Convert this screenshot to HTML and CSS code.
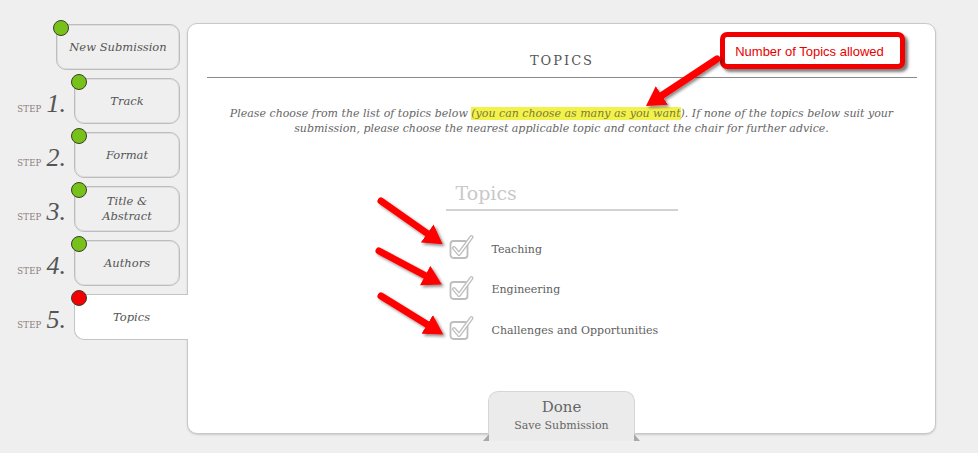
FILE: index.html
```html
<!DOCTYPE html>
<html>
<head>
<meta charset="utf-8">
<link rel="stylesheet" href="styles.css">
</head>
<body>
<div class="page">
  <nav class="steps">
    <div class="step-row">
      <div class="tab tab-wide"><span class="dot"></span>New Submission</div>
    </div>
    <div class="step-row">
      <div class="step-label"><span class="step-word">STEP</span><span class="step-num">1.</span></div>
      <div class="tab"><span class="dot"></span>Track</div>
    </div>
    <div class="step-row">
      <div class="step-label"><span class="step-word">STEP</span><span class="step-num">2.</span></div>
      <div class="tab"><span class="dot"></span>Format</div>
    </div>
    <div class="step-row">
      <div class="step-label"><span class="step-word">STEP</span><span class="step-num">3.</span></div>
      <div class="tab"><span class="dot"></span>Title &amp;<br>Abstract</div>
    </div>
    <div class="step-row">
      <div class="step-label"><span class="step-word">STEP</span><span class="step-num">4.</span></div>
      <div class="tab"><span class="dot"></span>Authors</div>
    </div>
    <div class="step-row">
      <div class="step-label"><span class="step-word">STEP</span><span class="step-num">5.</span></div>
      <div class="tab tab-active"><span class="dot dot-red"></span>Topics</div>
    </div>
  </nav>
  <main class="panel">
    <h1 class="panel-title">TOPICS</h1>
    <p class="intro">Please choose from the list of topics below <mark class="hl">(you can choose as many as you want</mark>). If none of the topics below suit your<br>submission, please choose the nearest applicable topic and contact the chair for further advice.</p>
    <section class="topics">
      <h2 class="topics-title">Topics</h2>
      <ul class="topic-list">
        <li class="topic"><svg class="check" width="26" height="26" viewBox="0 0 26 26"><rect x="1.5" y="7" width="17" height="17" rx="3" fill="none" stroke="#bdbdbd" stroke-width="1.8"/><path d="M5 14 L10 20 L22.5 3" fill="none" stroke="#bdbdbd" stroke-width="4" stroke-linejoin="round" stroke-linecap="round"/><path d="M5 14 L10 20 L22.5 3" fill="none" stroke="#fff" stroke-width="1.4" stroke-linejoin="round" stroke-linecap="round"/></svg><span>Teaching</span></li>
        <li class="topic"><svg class="check" width="26" height="26" viewBox="0 0 26 26"><rect x="1.5" y="7" width="17" height="17" rx="3" fill="none" stroke="#bdbdbd" stroke-width="1.8"/><path d="M5 14 L10 20 L22.5 3" fill="none" stroke="#bdbdbd" stroke-width="4" stroke-linejoin="round" stroke-linecap="round"/><path d="M5 14 L10 20 L22.5 3" fill="none" stroke="#fff" stroke-width="1.4" stroke-linejoin="round" stroke-linecap="round"/></svg><span>Engineering</span></li>
        <li class="topic"><svg class="check" width="26" height="26" viewBox="0 0 26 26"><rect x="1.5" y="7" width="17" height="17" rx="3" fill="none" stroke="#bdbdbd" stroke-width="1.8"/><path d="M5 14 L10 20 L22.5 3" fill="none" stroke="#bdbdbd" stroke-width="4" stroke-linejoin="round" stroke-linecap="round"/><path d="M5 14 L10 20 L22.5 3" fill="none" stroke="#fff" stroke-width="1.4" stroke-linejoin="round" stroke-linecap="round"/></svg><span>Challenges and Opportunities</span></li>
      </ul>
    </section>
    <div class="done">
      <span class="done-main">Done</span>
      <span class="done-sub">Save Submission</span>
    </div>
  </main>
</div>
<div class="callout">Number of Topics allowed</div>
<svg class="annotations" width="978" height="453" viewBox="0 0 978 453">
  <defs>
    <filter id="sh" x="-20%" y="-20%" width="140%" height="140%">
      <feDropShadow dx="2" dy="2" stdDeviation="1.5" flood-color="#000" flood-opacity="0.45"/>
    </filter>
    <marker id="head" markerUnits="userSpaceOnUse" markerWidth="20" markerHeight="22" refX="1" refY="11" orient="auto">
      <path d="M0,0 L19,11 L0,22 z" fill="#f00"/>
    </marker>
  </defs>
  <g filter="url(#sh)" stroke="#f00" stroke-width="7" stroke-linecap="round" fill="none">
    <line x1="717" y1="59" x2="661" y2="96" marker-end="url(#head)"/>
    <line x1="381" y1="201" x2="428" y2="234" marker-end="url(#head)"/>
    <line x1="379" y1="251" x2="426" y2="276" marker-end="url(#head)"/>
    <line x1="381" y1="296" x2="428" y2="325" marker-end="url(#head)"/>
  </g>
</svg>
</body>
</html>
```

FILE: styles.css
```css
html, body {
  margin: 0;
  padding: 0;
}
body {
  background: #efefef;
  font-family: "DejaVu Serif", "Liberation Serif", serif;
  color: #555;
  width: 978px;
  height: 453px;
  overflow: hidden;
  position: relative;
}
.page {
  display: flex;
  padding-top: 23px;
}
.steps {
  width: 187px;
  display: flex;
  flex-direction: column;
  gap: 8px;
  padding-top: 1px;
}
.step-row {
  display: flex;
  align-items: center;
  justify-content: flex-end;
  height: 46px;
}
.step-label {
  flex: 1;
  display: flex;
  align-items: baseline;
  justify-content: flex-end;
  gap: 5px;
  padding-right: 8px;
  padding-top: 6px;
}
.step-word {
  font-size: 8.5px;
  color: #8a7c7c;
  letter-spacing: 0.2px;
}
.step-num {
  font-family: "Liberation Serif", serif;
  font-style: italic;
  font-size: 26px;
  line-height: 26px;
  color: #555;
}
.tab {
  position: relative;
  box-sizing: border-box;
  width: 106px;
  height: 46px;
  margin-right: 7px;
  border: 1px solid #bdbdbd;
  box-shadow: inset 0 0 0 1px #dedede;
  border-radius: 10px;
  display: flex;
  align-items: center;
  justify-content: center;
  text-align: center;
  font-style: italic;
  font-size: 11.5px;
  line-height: 15px;
  color: #555;
}
.tab-wide {
  width: 124px;
}
.tab-active {
  z-index: 2;
  width: 114px;
  margin-right: -1px;
  background: #fff;
  border-right: none;
  border-radius: 10px 0 0 10px;
  box-shadow: none;
  border-color: #c4c4c4;
}
.dot {
  position: absolute;
  left: -4px;
  top: -5px;
  width: 14px;
  height: 14px;
  border-radius: 50%;
  background: #77c21a;
  border: 1px solid #3d3d2a;
}
.dot-red {
  background: #f40000;
}
.panel {
  box-sizing: border-box;
  width: 749px;
  height: 411px;
  background: #fff;
  border: 1px solid #c8c8c8;
  border-radius: 10px;
  box-shadow: 0 1px 2px rgba(0,0,0,0.15);
  display: flex;
  flex-direction: column;
}
.panel-title {
  margin: 0 18px 0 19px;
  padding: 29px 0 8px;
  border-bottom: 1px solid #8a8a8a;
  font-weight: normal;
  font-size: 13px;
  line-height: 16px;
  letter-spacing: 2px;
  text-align: center;
  color: #555;
}
.intro {
  margin: 28px 20px 0;
  font-size: 11px;
  line-height: 15px;
  font-style: italic;
  text-align: center;
  color: #666;
}
.hl {
  background: #f3f24a;
  color: #7b7b3e;
}
.topics {
  width: 232px;
  margin: 45px auto 0;
}
.topics-title {
  margin: 0;
  padding: 0 0 4px 10px;
  font-weight: normal;
  font-size: 19px;
  line-height: 24px;
  color: #c9c9c9;
  border-bottom: 2px solid #d2d2d2;
}
.topic-list {
  list-style: none;
  margin: 0;
  padding: 18px 0 0 3px;
}
.topic {
  display: flex;
  align-items: center;
  gap: 17px;
  height: 40.5px;
  font-size: 11px;
  color: #606060;
}
.check {
  display: block;
  margin-top: -4px;
}
.done {
  position: relative;
  align-self: center;
  margin-top: auto;
  margin-bottom: -8px;
  box-sizing: border-box;
  width: 147px;
  height: 50px;
  background: #ebebeb;
  border: 1px solid #d6d6d6;
  border-bottom: none;
  border-radius: 10px 10px 0 0;
  display: flex;
  flex-direction: column;
  align-items: center;
  padding-top: 5px;
}
.done::before, .done::after {
  content: "";
  position: absolute;
  bottom: 0;
  width: 0;
  height: 0;
  border-top: 7px solid transparent;
}
.done::before {
  left: -6px;
  border-right: 6px solid #a8a8a8;
}
.done::after {
  right: -6px;
  border-left: 6px solid #a8a8a8;
}
.done-main {
  font-size: 15px;
  line-height: 20px;
  color: #666;
}
.done-sub {
  font-size: 11px;
  line-height: 18px;
  color: #666;
}
.callout {
  position: absolute;
  left: 720px;
  top: 32px;
  box-sizing: border-box;
  width: 185px;
  height: 37px;
  border: 5px solid #f20000;
  border-radius: 7px;
  background: #fff;
  box-shadow: 3px 3px 3px rgba(0,0,0,0.5);
  font-family: "Liberation Sans", Arial, sans-serif;
  font-size: 13px;
  color: #e60000;
  display: flex;
  align-items: center;
  justify-content: center;
  padding: 1px 6px 0 0;
}
.annotations {
  position: absolute;
  left: 0;
  top: 0;
  pointer-events: none;
}
```
